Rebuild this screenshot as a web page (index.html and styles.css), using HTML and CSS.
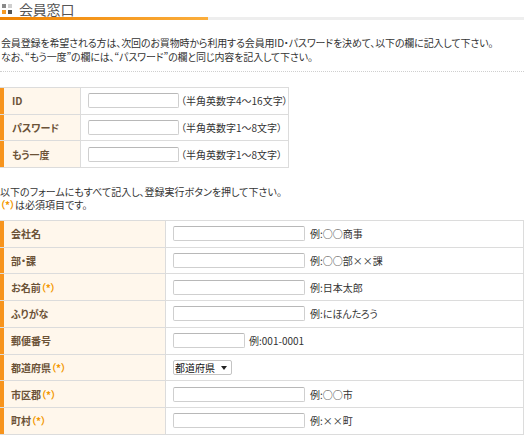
FILE: index.html
```html
<!DOCTYPE html>
<html lang="ja">
<head>
<meta charset="utf-8">
<title>会員窓口</title>
<link rel="stylesheet" href="styles.css">
</head>
<body>
<div class="header">
  <span class="mark"><i class="m1"></i><i class="m2"></i><i class="m3"></i><i class="m4"></i></span>
  <h1 class="title">会員窓口</h1>
</div>
<div class="bar"></div>

<p class="intro">会員登録を希望される方は、次回のお買物時から利用する会員用ID・パスワードを決めて、以下の欄に記入して下さい。<br>なお、“もう一度”の欄には、“パスワード”の欄と同じ内容を記入して下さい。</p>

<div class="form form-login">
  <div class="row"><div class="label">ID</div><div class="field"><input class="input" type="text"><span class="note">（半角英数字4～16文字）</span></div></div>
  <div class="row"><div class="label">パスワード</div><div class="field"><input class="input" type="password"><span class="note">（半角英数字1～8文字）</span></div></div>
  <div class="row"><div class="label">もう一度</div><div class="field"><input class="input" type="password"><span class="note">（半角英数字1～8文字）</span></div></div>
</div>

<div class="guide">
  <p class="guide-line">以下のフォームにもすべて記入し、登録実行ボタンを押して下さい。</p>
  <p class="guide-line"><span class="req">（*）</span>は必須項目です。</p>
</div>

<div class="form form-info">
  <div class="row"><div class="label">会社名</div><div class="field"><input class="input" type="text"><span class="note">例:○○商事</span></div></div>
  <div class="row"><div class="label">部・課</div><div class="field"><input class="input" type="text"><span class="note">例:○○部××課</span></div></div>
  <div class="row"><div class="label">お名前<span class="req">（*）</span></div><div class="field"><input class="input" type="text"><span class="note">例:日本太郎</span></div></div>
  <div class="row"><div class="label">ふりがな</div><div class="field"><input class="input" type="text"><span class="note">例:にほんたろう</span></div></div>
  <div class="row"><div class="label">郵便番号</div><div class="field"><input class="input input-zip" type="text"><span class="note note-zip">例:001-0001</span></div></div>
  <div class="row"><div class="label">都道府県<span class="req">（*）</span></div><div class="field"><span class="select-wrap"><select class="select"><option>都道府県</option></select></span></div></div>
  <div class="row"><div class="label">市区郡<span class="req">（*）</span></div><div class="field"><input class="input" type="text"><span class="note">例:○○市</span></div></div>
  <div class="row"><div class="label">町村<span class="req">（*）</span></div><div class="field"><input class="input" type="text"><span class="note">例:××町</span></div></div>
</div>
</body>
</html>
```

FILE: styles.css
```css
html, body {
  margin: 0;
  padding: 0;
  background: #fff;
}
body {
  font-family: "Noto Sans CJK JP", "Noto Sans", sans-serif;
  font-size: 10px;
  color: #333;
  font-feature-settings: "palt";
  overflow: hidden;
  width: 524px;
  height: 438px;
}
.header {
  display: flex;
  align-items: center;
  gap: 7px;
  height: 17px;
  padding-left: 2px;
}
.mark {
  display: grid;
  grid-template-columns: 4px 4px;
  grid-template-rows: 4px 4px;
  gap: 2px;
  margin-top: 1px;
}
.mark i { display: block; }
.m1 { background: #8a8a8a; }
.m2 { background: #cfcfcf; }
.m3 { background: #f59a23; }
.m4 { background: #555; }
.title {
  margin: 2px 0 0;
  font-size: 14px;
  font-weight: normal;
  color: #555;
  line-height: 15px;
  letter-spacing: -0.2px;
}
.bar {
  height: 3px;
  background: linear-gradient(to right, #ef8200, #fbae3c) 0 0 / 208px 100% no-repeat, #eeeeee;
}
.intro {
  margin: 16px 0 0;
  padding: 0 0 7px 1px;
  line-height: 14px;
  letter-spacing: -0.15px;
  border-bottom: 1px dotted #cfcfcf;
}
.form {
  border-top: 1px solid #dcdcdc;
  border-right: 1px solid #dcdcdc;
}
.form-login {
  margin-top: 15px;
  width: 288px;
}
.form-info {
  margin-top: 9px;
  width: 523px;
}
.row {
  display: grid;
  height: 26.7px;
  box-sizing: border-box;
  border-bottom: 1px solid #dcdcdc;
}
.form-login .row { grid-template-columns: 81px 1fr; }
.form-info .row { grid-template-columns: 166px 1fr; }
.label {
  display: flex;
  align-items: center;
  box-sizing: border-box;
  border-left: 4px solid #f7941d;
  border-right: 1px solid #dcdcdc;
  background: #fff7ec;
  color: #6b5237;
  font-weight: bold;
  padding-left: 7px;
}
.form-login .label { padding-left: 8px; }
.req {
  color: #f39800;
  font-weight: bold;
}
.field {
  display: flex;
  align-items: center;
  padding-left: 7px;
  gap: 5px;
}
.form-login .field { gap: 2px; }
.input {
  box-sizing: border-box;
  width: 132px;
  height: 15px;
  margin: 0;
  padding: 0 2px;
  border: 1px solid #cfcfcf;
  border-top-color: #b8b8b8;
  border-radius: 2px;
  background: #fff;
  font-size: 10px;
}
.form-login .input { width: 91px; }
.input-zip { width: 72px; }
.note-zip { margin-left: -1px; }
.note {
  white-space: nowrap;
  color: #333;
}
.guide {
  margin-top: 17px;
  display: flex;
  flex-direction: column;
}
.guide-line {
  margin: 0;
  height: 13px;
  line-height: 13px;
}
.select-wrap {
  position: relative;
  display: inline-block;
}
.select-wrap::after {
  content: "";
  position: absolute;
  right: 5px;
  top: 6px;
  border-left: 3px solid transparent;
  border-right: 3px solid transparent;
  border-top: 4px solid #222;
  pointer-events: none;
}
.select {
  -webkit-appearance: none;
  appearance: none;
  box-sizing: border-box;
  width: 59px;
  height: 15px;
  margin: 0;
  padding: 0 0 0 1px;
  border: 1px solid #c4c4c4;
  border-radius: 2px;
  background: #fff;
  font-family: "Noto Sans CJK JP", sans-serif;
  font-size: 10px;
  line-height: 13px;
  color: #111;
}
```
